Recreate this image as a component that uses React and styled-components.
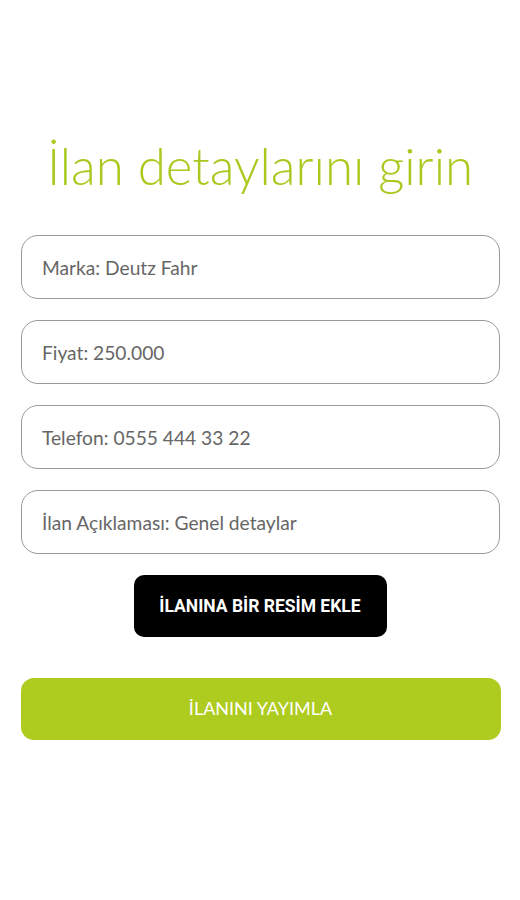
import React from 'react';
import styled, { createGlobalStyle } from 'styled-components';

const GlobalStyle = createGlobalStyle`
  html, body {
    margin: 0;
    padding: 0;
    background: #ffffff;
  }
  * {
    box-sizing: border-box;
  }
`;

const Page = styled.div`
  width: 520px;
  min-height: 900px;
  background: #fff;
  padding: 133px 20px 0 20px;
  display: flex;
  flex-direction: column;
  align-items: center;
  font-family: 'Lato', 'Open Sans', sans-serif;
`;

const Title = styled.h1`
  margin: 0 0 36px 0;
  font-family: 'Lato', sans-serif;
  font-weight: 300;
  font-size: 51px;
  line-height: 66px;
  color: #a9c91f;
  text-align: center;
  white-space: nowrap;
`;

const Form = styled.div`
  width: 100%;
  display: flex;
  flex-direction: column;
  gap: 21px;
`;

const Field = styled.div`
  height: 64px;
  border: 1.5px solid #9a9a9a;
  border-radius: 17px;
  display: flex;
  align-items: center;
  padding: 0 20px;
  font-family: 'Lato', sans-serif;
  font-size: 19.2px;
  color: #666;
  margin-left: 1px;
`;

const PhotoButton = styled.button`
  margin-top: 21px;
  width: 253px;
  height: 62px;
  border: none;
  border-radius: 10px;
  background: #000;
  color: #fff;
  font-family: 'Roboto', sans-serif;
  font-weight: 700;
  font-size: 17.5px;
  cursor: pointer;
`;

const PublishButton = styled.button`
  margin-top: 41px;
  width: 480px;
  margin-left: 1px;
  height: 62px;
  border: none;
  border-radius: 13px;
  background: #aecb20;
  color: #fff;
  font-family: 'Lato', sans-serif;
  font-weight: 400;
  font-size: 18px;
  padding-bottom: 3px;
  cursor: pointer;
`;

const fields = [
  'Marka: Deutz Fahr',
  'Fiyat: 250.000',
  'Telefon: 0555 444 33 22',
  'İlan Açıklaması: Genel detaylar',
];

export default function App() {
  return (
    <>
      <GlobalStyle />
      <Page>
        <Title>İlan detaylarını girin</Title>
        <Form>
          {fields.map((f) => (
            <Field key={f}>{f}</Field>
          ))}
        </Form>
        <PhotoButton>İLANINA BİR RESİM EKLE</PhotoButton>
        <PublishButton>İLANINI YAYIMLA</PublishButton>
      </Page>
    </>
  );
}
